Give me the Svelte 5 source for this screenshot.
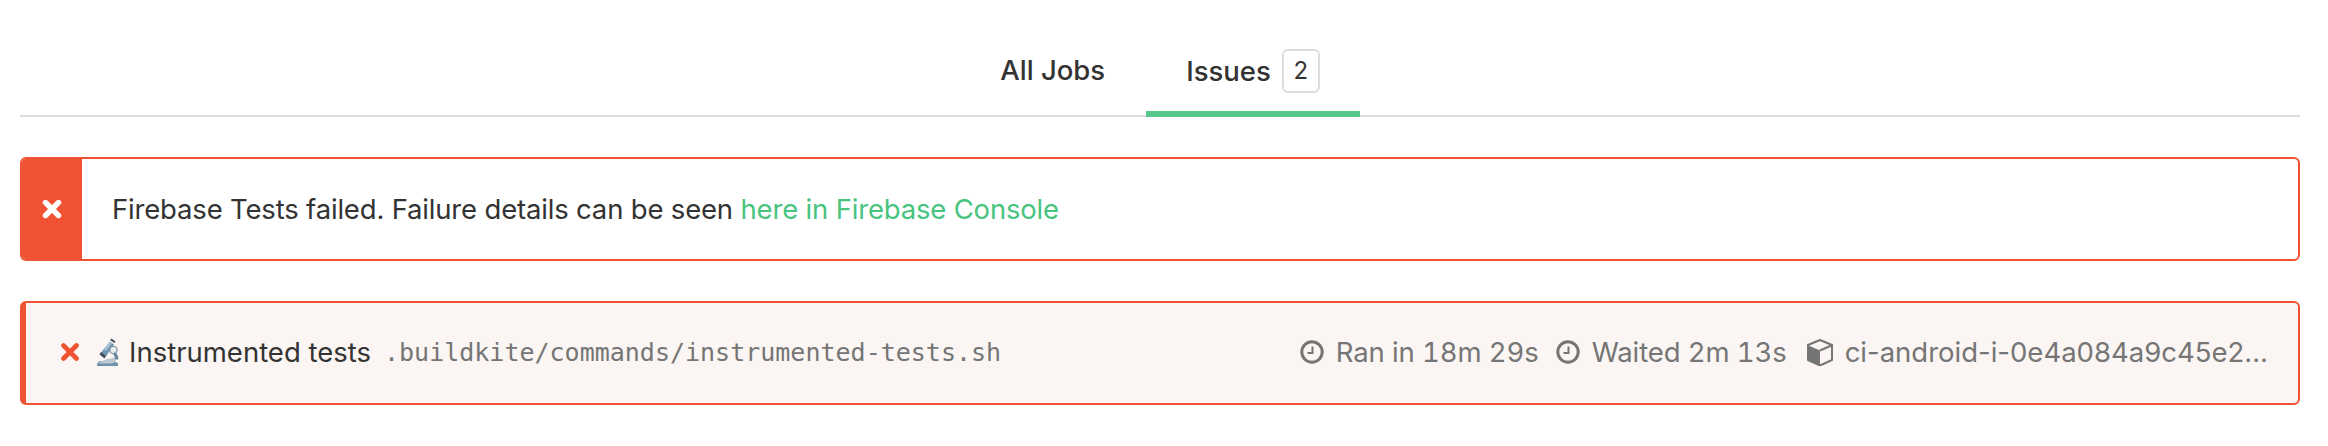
<script>
  const tabs = [
    { label: 'All Jobs', active: false },
    { label: 'Issues', active: true, count: 2 }
  ];
</script>

<div class="page">
  <nav class="tabs">
    {#each tabs as tab}
      <div class="tab" class:active={tab.active}>
        <span>{tab.label}</span>
        {#if tab.count}<span class="badge">{tab.count}</span>{/if}
      </div>
    {/each}
  </nav>

  <section class="alert">
    <div class="alert-icon">
      <svg width="20" height="20" viewBox="0 0 20 20"><path d="M3.5 3.5 16.5 16.5M16.5 3.5 3.5 16.5" stroke="#fff" stroke-width="5.4" stroke-linecap="round" /></svg>
    </div>
    <p>Firebase Tests failed. Failure details can be seen <span class="link">here in Firebase Console</span></p>
  </section>

  <section class="job">
    <div class="job-title">
      <svg class="cross" width="18" height="18" viewBox="0 0 18 18"><path d="M2.500 2.500 15.500 15.500M15.500 2.500 2.500 15.500" stroke="#ef5333" stroke-width="4.600" stroke-linecap="round" /></svg>
      <svg class="scope" width="24" height="29" viewBox="0 0 24 28">
        <path d="M2 27.500h21v-2.500c-2-2-5-2.500-9-2.500H6c-2 0-4 1.500-4 5z" fill="#6f92a8" />
        <path d="M4 24c3-1 7-4 12-4 2 0 3-1 3-3l2 1c1 4-1 7-5 7H4z" fill="#bcc8d0" />
        <path d="M6 14 15 3l4 3-8 12z" fill="#6f97b3" />
        <path d="m9 11 6-8 2 1.500-6 8z" fill="#a9c3d4" />
        <path d="m15 1.500 1.500-1.500 4 3-1 1.500z" fill="#3f4c57" />
        <path d="m4.500 16 1.500-2.500 5 4-1.500 2.500z" fill="#3f4c57" />
        <circle cx="18.500" cy="11.500" r="3.800" fill="#e4eaee" stroke="#6f8496" />
        <path d="M19 15c2 1 3 3 3 6" stroke="#5f7f94" stroke-width="2.600" fill="none" />
      </svg>
      <span class="name">Instrumented tests</span>
      <code>.buildkite/commands/instrumented-tests.sh</code>
    </div>
    <div class="meta">
      <span class="item duration">
        <svg width="24" height="24" viewBox="0 0 24 24"><circle cx="12" cy="12" r="10.200" fill="none" stroke="#757575" stroke-width="3" /><path d="M12.500 6.500v6.500H7.500" fill="none" stroke="#757575" stroke-width="2" /></svg>
        Ran in 18m 29s
      </span>
      <span class="item duration">
        <svg width="24" height="24" viewBox="0 0 24 24"><circle cx="12" cy="12" r="10.200" fill="none" stroke="#757575" stroke-width="3" /><path d="M12.500 6.500v6.500H7.500" fill="none" stroke="#757575" stroke-width="2" /></svg>
        Waited 2m 13s
      </span>
      <span class="item agent">
        <svg width="26" height="27" viewBox="0 0 26 27">
          <path d="M13 1 25 6v15l-12 5.500L1 21V6z" fill="none" stroke="#757575" stroke-width="2" stroke-linejoin="round" />
          <path d="M1.500 6.500 13 11.500v14.500L1.500 21z" fill="#757575" />
          <path d="M13 11.500 24.500 6.500" stroke="#757575" stroke-width="2" />
        </svg>
        <span>ci-android-i-0e4a084a9c45e2...</span>
      </span>
    </div>
  </section>
</div>

<style>
  :global(body) {
    margin: 0;
    background: #fff;
    font-family: Inter, "Noto Sans", sans-serif;
    color: #333;
  }
  .page {
    padding: 30px 28px 0 20px;
    display: flex;
    flex-direction: column;
  }
  .tabs {
    display: flex;
    justify-content: center;
    height: 85px;
    border-bottom: 2px solid #ddd;
  }
  .tab {
    display: flex;
    align-items: center;
    gap: 11px;
    padding: 0 40.5px 5px;
    font-size: 27.5px;
    font-weight: 500;
    height: 85px;
    box-sizing: border-box;
  }
  .tab.active {
    border-bottom: 6px solid #55c78a;
    height: 87px;
    padding-bottom: 0;
  }
  .badge {
    display: flex;
    align-items: center;
    justify-content: center;
    width: 38px;
    height: 44px;
    box-sizing: border-box;
    border: 2px solid #ddd;
    border-radius: 6px;
    font-size: 24px;
    font-weight: 400;
  }
  .alert {
    margin-top: 40px;
    height: 104px;
    box-sizing: border-box;
    display: flex;
    align-items: center;
    border: 2px solid #ef5333;
    border-radius: 6px;
    overflow: hidden;
  }
  .alert-icon {
    width: 60px;
    align-self: stretch;
    background: #ef5333;
    display: flex;
    align-items: center;
    justify-content: center;
    margin-right: 30px;
  }
  .alert p {
    margin: 0;
    font-size: 27.5px;
    letter-spacing: -0.18px;
  }
  .link { color: #49c480; }
  .job {
    margin-top: 40px;
    height: 104px;
    box-sizing: border-box;
    display: flex;
    align-items: center;
    justify-content: space-between;
    border: 2px solid #ef5333;
    border-left-width: 6px;
    border-radius: 6px;
    background: #fbf6f3;
    padding: 0 30px 2px 35px;
  }
  .job-title, .meta, .item {
    display: flex;
    align-items: center;
  }
  .cross { margin-right: 16px; }
  .scope { margin-right: 10px; }
  .name { font-size: 27.5px; }
  code {
    margin-left: 13px;
    font-family: "DejaVu Sans Mono", monospace;
    font-size: 25px;
    color: #757575;
  }
  .meta {
    color: #757575;
    font-size: 27.500px;
    gap: 17px;
  }
  .duration {
    font-variant-numeric: tabular-nums;
    letter-spacing: -0.1px;
  }
  .item { gap: 12px; }
  .agent { margin-left: 3px; }
</style>
